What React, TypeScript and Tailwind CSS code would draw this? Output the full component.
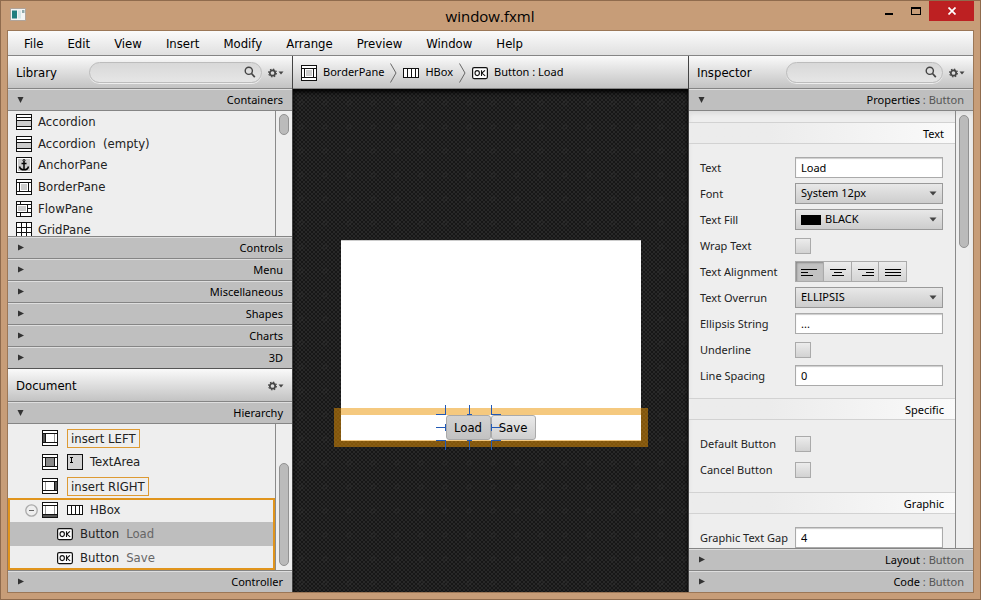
import type { ReactNode } from "react";

const INK = "#111";

function Icon({ children }: { children: ReactNode }) {
  return (
    <svg width="16" height="16" viewBox="0 0 16 16" fill="none" stroke={INK} className="shrink-0" aria-hidden="true" shapeRendering="crispEdges">
      {children}
    </svg>
  );
}

const Frame = ({ fill = "#fff" }: { fill?: string }) => <rect x="0.5" y="0.5" width="15" height="15" fill={fill} />;

const AccordionIcon = () => (
  <Icon>
    <Frame />
    <rect x="1" y="7" width="14" height="5" fill="#ccc" stroke="none" />
    <path d="M1 3.5h14M1 6.5h14M1 12.5h14" />
  </Icon>
);
const AnchorIcon = () => (
  <Icon>
    <Frame />
    <rect x="2" y="2" width="12" height="12" fill="#ccc" stroke="none" />
    <g shapeRendering="auto" stroke="#000">
      <circle cx="8" cy="3.5" r="1" />
      <path d="M8 4.5v8M5.5 6.5h5" strokeWidth="1.5" />
      <path d="M3.5 9.5c.5 2.2 2.2 3.3 4.5 3.3s4-1.1 4.5-3.3" strokeWidth="1.5" />
    </g>
  </Icon>
);
const BorderPaneIcon = () => (
  <Icon>
    <Frame />
    <rect x="5" y="5" width="6" height="6" fill="#ccc" stroke="none" />
    <path d="M1 3.5h14M1 12.5h14M3.5 3v10M12.5 3v10" />
  </Icon>
);
const FlowPaneIcon = () => (
  <Icon>
    <Frame />
    <rect x="2" y="5" width="8" height="5" fill="#ccc" stroke="none" />
    <path d="M1 3.5h14M1 11.5h14M4.5 1v3M11.5 4v7M12 7.5h4M4.5 12v3" />
  </Icon>
);
const GridPaneIcon = () => (
  <Icon>
    <Frame />
    <path d="M1 5.5h14M1 10.5h14M5.5 1v14M10.5 1v14" />
  </Icon>
);
function RegionIcon({ region }: { region: "left" | "center" | "right" | "bottom" }) {
  return (
    <Icon>
      <Frame />
      <path d="M1 3.5h14M1 12.5h14" />
      <path d="M3.5 4v8M12.5 4v8" stroke={region === "center" ? INK : "#999"} />
      {region === "left" && <rect x="0.5" y="3.5" width="3" height="9" fill="#555" />}
      {region === "center" && <rect x="3.5" y="3.5" width="9" height="9" fill="#888" />}
      {region === "right" && <rect x="12.5" y="3.5" width="3" height="9" fill="#555" />}
      {region === "bottom" && <rect x="0.5" y="12.5" width="15" height="3" fill="#555" />}
    </Icon>
  );
}
const TextAreaIcon = () => (
  <Icon>
    <Frame fill="#d4d4d4" />
    <path d="M3 3.5h3M4.5 3v5M3 8.5h3" stroke="#000" />
  </Icon>
);
const HBoxIcon = () => (
  <Icon>
    <rect x="0.5" y="3.5" width="15" height="9" fill="#fff" />
    <path d="M4.5 4v8M8.5 4v8M12.5 4v8" />
  </Icon>
);
const OkIcon = () => (
  <svg width="16" height="16" viewBox="0 0 16 16" className="shrink-0" aria-hidden="true">
    <rect x="0.6" y="2.6" width="14.8" height="11" rx="1.5" fill="#fff" stroke="#111" strokeWidth="1.2" />
    <g fill="none" stroke="#111" strokeWidth="1.1">
      <ellipse cx="5.2" cy="8.1" rx="2.2" ry="2.5" />
      <path d="M9.5 5.3v5.6M13 5.3 9.8 8.1 13.2 10.9" />
    </g>
  </svg>
);

const GearIcon = () => (
  <svg width="16" height="10" viewBox="0 0 16 10" aria-hidden="true">
    <circle cx="4.5" cy="5" r="2.7" fill="none" stroke="#444" strokeWidth="1.7" />
    <circle cx="4.5" cy="5" r="3.9" fill="none" stroke="#444" strokeWidth="1.1" strokeDasharray="1.53 1.53" />
    <path d="M10.5 3.5h5l-2.5 3z" fill="#444" />
  </svg>
);
const SearchIcon = () => (
  <svg width="12" height="12" viewBox="0 0 12 12" fill="none" stroke="#444" className="pointer-events-none absolute top-1 right-1.5" aria-hidden="true">
    <circle cx="4.8" cy="4.8" r="3.6" strokeWidth="1.4" />
    <path d="m7.5 7.5 3.3 3.6" strokeWidth="1.7" />
  </svg>
);

const PANEL_BAR = "flex h-[33px] shrink-0 items-center border-b border-[#858585] bg-linear-to-b from-[#fafafa] to-[#c3c3c3] pt-px";

function PanelHeader({ title, search }: { title: string; search?: boolean }) {
  return (
    <div className={`${PANEL_BAR} pr-2 pl-2`}>
      <h2 className="w-[73px] text-[13px]">{title}</h2>
      {search && (
        <div className={title === "Library" ? "relative flex-1" : "relative ml-4 flex-1"}>
          <input
            type="search"
            aria-label={`Search ${title}`}
            className="block h-[21px] w-full appearance-none rounded-full border border-[#bcbcbc] bg-linear-to-b from-[#d8d8d8] to-[#e6e6e6] pr-6 pl-3 text-[11px] shadow-[0_1px_0_#eee] outline-none"
          />
          <SearchIcon />
        </div>
      )}
      <button type="button" aria-label={`${title} options`} className={search ? "ml-1.5" : "ml-auto"}>
        <GearIcon />
      </button>
    </div>
  );
}

function SectionBar({ label, detail, open }: { label: string; detail?: string; open?: boolean }) {
  return (
    <button
      type="button"
      aria-expanded={!!open}
      className="flex h-[22px] w-full shrink-0 items-center justify-between border-t border-b border-t-[#dedede] border-b-[#858585] bg-[#bfbfbf] pr-[9px] pl-2 font-['Noto_Sans',sans-serif] text-[11px] last:h-[21px] last:border-b-0"
    >
      <svg width="10" height="10" viewBox="0 0 10 10" fill="#333" aria-hidden="true">
        {open ? <path d="M1.5 2h6l-3 6z" /> : <path d="M2 1.5 8 4.5 2 7.5z" />}
      </svg>
      <span>
        {label}
        {detail && <span className="text-[#555]"> : {detail}</span>}
      </span>
    </button>
  );
}

const LIBRARY = [
  { name: "Accordion", icon: <AccordionIcon /> },
  { name: "Accordion  (empty)", icon: <AccordionIcon /> },
  { name: "AnchorPane", icon: <AnchorIcon /> },
  { name: "BorderPane", icon: <BorderPaneIcon /> },
  { name: "FlowPane", icon: <FlowPaneIcon /> },
  { name: "GridPane", icon: <GridPaneIcon /> },
];

function TreeButtonRow({ value, selected }: { value: string; selected?: boolean }) {
  return (
    <li className={`flex h-6 items-center pl-[47px] ${selected ? "bg-[#bebebe]" : ""}`}>
      <OkIcon />
      <span className="ml-[7px]">Button</span>
      <span className="ml-[7px] text-[#666]">{value}</span>
    </li>
  );
}

function InsertRow({ region, label }: { region: "left" | "right"; label: string }) {
  return (
    <li className="flex h-6 items-center pl-[34px]">
      <RegionIcon region={region} />
      <span className="ml-[9px] border border-[#dd9a33] px-[3px] leading-[17px]">{label}</span>
    </li>
  );
}

function LeftColumn() {
  return (
    <aside className="flex w-[285px] shrink-0 flex-col border-r border-[#444]">
      <PanelHeader title="Library" search />
      <SectionBar label="Containers" open />
      <div className="flex min-h-0 flex-1 overflow-hidden bg-[#eee]">
        <ul className="flex h-[130px] flex-1 flex-col">
          {LIBRARY.map((it) => (
            <li key={it.name} className="flex min-h-0 flex-1 items-center gap-1.5 pl-2 text-[13px] whitespace-pre text-[#222]">
              {it.icon}
              {it.name}
            </li>
          ))}
        </ul>
        <div className="w-[17px] border-l border-[#8a8a8a] px-[3px] pt-[3px]">
          <div className="h-[21px] w-2.5 rounded-full border border-[#929292] bg-[#bbb]" />
        </div>
      </div>
      <div className="flex shrink-0 flex-col border-t border-b border-t-[#858585] border-b-[#555]">
        {["Controls", "Menu", "Miscellaneous", "Shapes", "Charts", "3D"].map((s) => (
          <SectionBar key={s} label={s} />
        ))}
      </div>
      <PanelHeader title="Document" />
      <SectionBar label="Hierarchy" open />
      <div className="flex h-[146px] shrink-0 bg-[#eee]">
        <ul className="flex flex-1 flex-col justify-end text-[13px] text-[#222]">
          <InsertRow region="left" label="insert LEFT" />
          <li className="flex h-6 items-center pl-[34px]">
            <RegionIcon region="center" />
            <span className="ml-[9px] flex items-center gap-[7px]">
              <TextAreaIcon />
              TextArea
            </span>
          </li>
          <InsertRow region="right" label="insert RIGHT" />
          <li className="outline-2 -outline-offset-2 outline-[#e0941c]">
            <div className="flex h-6 items-center pl-[17px]">
              <button type="button" aria-label="Collapse HBox">
                <svg width="13" height="13" viewBox="0 0 13 13" fill="none" aria-hidden="true">
                  <circle cx="6.5" cy="6.5" r="5.7" stroke="#aaa" strokeWidth="1.3" />
                  <path d="M4 6.5h5" stroke="#666" />
                </svg>
              </button>
              <span className="ml-1">
                <RegionIcon region="bottom" />
              </span>
              <span className="ml-[9px] flex items-center gap-[7px]">
                <HBoxIcon />
                HBox
              </span>
            </div>
            <ul className="px-0.5">
              <TreeButtonRow value="Load" selected />
              <TreeButtonRow value="Save" />
            </ul>
          </li>
        </ul>
        <div className="w-[17px] border-l border-[#8a8a8a] px-[3px] pt-[39px] pb-1">
          <div className="h-full w-2.5 rounded-full border border-[#929292] bg-[#bbb]" />
        </div>
      </div>
      <div className="shrink-0 border-t border-[#858585]">
        <SectionBar label="Controller" />
      </div>
    </aside>
  );
}

function Chevron() {
  return (
    <svg width="7" height="20" viewBox="0 0 7 20" fill="none" stroke="#666" aria-hidden="true">
      <path d="M.5.5 6 10 .5 19.5" />
    </svg>
  );
}

function Canvas() {
  return (
    <main className="flex min-w-0 flex-1 flex-col">
      <nav aria-label="Selection path" className={`${PANEL_BAR} gap-1.5 pl-2 font-['Noto_Sans',sans-serif] text-[11px]`}>
        <BorderPaneIcon />
        BorderPane
        <Chevron />
        <HBoxIcon />
        HBox
        <Chevron />
        <OkIcon />
        Button : Load
      </nav>
      <div className="flex flex-1 items-center justify-center bg-[#1e1e1e] bg-[radial-gradient(circle_at_8px_14px,transparent_1px,#3a3a3a55_2px,transparent_3px),repeating-conic-gradient(#282828_0_25%,#171717_0_50%)] bg-size-[24px_24px,4px_4px] shadow-[inset_0_3px_4px_#000]">
        <div className="flex h-[201px] w-[300px] flex-col border-t border-[#ccc] bg-white">
          <div className="flex-1" />
          <div className="relative flex h-[27px] justify-center">
            <div className="absolute -inset-x-[7px] -top-1.5 -bottom-1.5 border-[7px] border-[#eb9300]/50" />
            <div className="relative flex py-px">
              <button type="button" className="h-[25px] w-[45px] rounded-[3px] border border-[#aaa] bg-linear-to-b from-[#d2d2d2] to-[#c2c2c2] text-[13px]">
                Load
              </button>
              <button type="button" className="h-[25px] w-[45px] rounded-[3px] border border-[#aaa] bg-linear-to-b from-[#eaeaea] to-[#cfcfcf] text-[13px]">
                Save
              </button>
              <svg
                width="68"
                height="48"
                viewBox="0 0 68 48"
                fill="none"
                stroke="#2259b5"
                className="pointer-events-none absolute -top-2.5 -left-2.5"
                aria-hidden="true"
              >
                <path d="M9.5 1v9M0 10.5h10M33.5 1v9M31 10.5h5M55.5 1v9M55 10.5h10" />
                <path d="M0 23.5h9M9.5 20v7M55.5 20v7M56 23.5h9" />
                <path d="M9.5 37v9M0 36.5h10M33.5 37v9M31 36.5h5M55.5 37v9M55 36.5h10" />
              </svg>
            </div>
          </div>
        </div>
      </div>
    </main>
  );
}

function GroupTitle({ children }: { children: string }) {
  return (
    <h3 className="h-[22px] border-t border-b border-[#d2d2d2] bg-linear-to-r from-[#ececec] from-30% to-[#fafafa] pr-[11px] text-right leading-[22px]">
      {children}
    </h3>
  );
}

function Group({ children }: { children: ReactNode }) {
  return <div className="pt-[11px] pr-3 pb-[9px] pl-[11px]">{children}</div>;
}

function Row({ label, id, children }: { label: string; id: string; children: ReactNode }) {
  return (
    <div className="flex h-[26px] items-start pt-0.5">
      <label htmlFor={id} className="w-[95px] shrink-0 leading-[22px] whitespace-nowrap text-[#222]">
        {label}
      </label>
      {children}
    </div>
  );
}

function TextRow({ label, id, value }: { label: string; id: string; value: string }) {
  return (
    <Row label={label} id={id}>
      <input
        id={id}
        type="text"
        defaultValue={value}
        className="h-[21px] w-full min-w-0 border border-[#aaa] bg-white px-[5px] shadow-[inset_0_1px_1px_#ccc] outline-none"
      />
    </Row>
  );
}

function SelectRow({ label, id, value, swatch }: { label: string; id: string; value: string; swatch?: boolean }) {
  return (
    <Row label={label} id={id}>
      <div className="relative w-full">
        <select
          id={id}
          className={`block h-[21px] w-full appearance-none border border-[#999] bg-linear-to-b from-[#e8e8e8] to-[#cdcdcd] pr-5 outline-none ${swatch ? "pl-[29px]" : "pl-[5px]"}`}
        >
          <option>{value}</option>
        </select>
        {swatch && <span className="pointer-events-none absolute top-1.5 left-1.5 h-2.5 w-5 bg-black" />}
        <svg width="8" height="5" viewBox="0 0 8 5" className="pointer-events-none absolute top-2 right-1.5" aria-hidden="true">
          <path d="M.5.5h7L4 4.5z" fill="#444" />
        </svg>
      </div>
    </Row>
  );
}

function CheckRow({ label, id }: { label: string; id: string }) {
  return (
    <Row label={label} id={id}>
      <input id={id} type="checkbox" className="mt-[3px] size-4 appearance-none border border-[#aaa] bg-linear-to-b from-[#ececec] to-[#d2d2d2]" />
    </Row>
  );
}

const ALIGNMENTS = [
  { name: "Left", d: "M5 7.5h16M5 10.5h7M5 13.5h12" },
  { name: "Center", d: "M6 7.5h16M10 10.5h8M8 13.5h12" },
  { name: "Right", d: "M6 7.5h16M14 10.5h8M10 13.5h12" },
  { name: "Justify", d: "M6 7.5h16M6 10.5h16M6 13.5h16" },
];

function Inspector() {
  return (
    <aside className="flex w-[285px] shrink-0 flex-col border-l border-[#444]">
      <PanelHeader title="Inspector" search />
      <SectionBar label="Properties" detail="Button" open />
      <div className="flex min-h-0 flex-1 overflow-hidden bg-[#eee] shadow-[inset_0_3px_4px_#ddd]">
        <form className="min-w-0 flex-1 pt-[11px] font-['Noto_Sans',sans-serif] text-[11px]">
          <GroupTitle>Text</GroupTitle>
          <Group>
            <TextRow label="Text" id="text" value="Load" />
            <SelectRow label="Font" id="font" value="System 12px" />
            <SelectRow label="Text Fill" id="fill" value="BLACK" swatch />
            <CheckRow label="Wrap Text" id="wrap" />
            <Row label="Text Alignment" id="align-Left">
              <div className="flex w-28 border-l border-[#aaa]">
                {ALIGNMENTS.map((a, i) => (
                  <button
                    key={a.name}
                    id={`align-${a.name}`}
                    type="button"
                    aria-label={a.name}
                    aria-pressed={i === 0}
                    className={`flex h-[21px] w-7 items-center overflow-hidden border-y border-r border-[#aaa] ${i === 0 ? "bg-[#c2c2c2] shadow-[inset_1px_1px_2px_#888]" : "bg-linear-to-b from-[#ececec] to-[#d4d4d4]"}`}
                  >
                    <svg width="27" height="19" viewBox="0 0 27 19" stroke="#000" className="shrink-0" aria-hidden="true" shapeRendering="crispEdges">
                      <path d={a.d} />
                    </svg>
                  </button>
                ))}
              </div>
            </Row>
            <SelectRow label="Text Overrun" id="overrun" value="ELLIPSIS" />
            <TextRow label="Ellipsis String" id="ellipsis" value="..." />
            <CheckRow label="Underline" id="underline" />
            <TextRow label="Line Spacing" id="spacing" value="0" />
          </Group>
          <GroupTitle>Specific</GroupTitle>
          <Group>
            <CheckRow label="Default Button" id="default" />
            <CheckRow label="Cancel Button" id="cancel" />
          </Group>
          <GroupTitle>Graphic</GroupTitle>
          <Group>
            <TextRow label="Graphic Text Gap" id="gap" value="4" />
          </Group>
        </form>
        <div className="w-[18px] shrink-0 border-l border-[#8a8a8a] px-[3px] pt-1">
          <div className="h-[133px] w-2.5 rounded-full border border-[#929292] bg-[#bbb]" />
        </div>
      </div>
      <div className="flex shrink-0 flex-col border-t border-[#858585]">
        <SectionBar label="Layout" detail="Button" />
        <SectionBar label="Code" detail="Button" />
      </div>
    </aside>
  );
}

export default function App() {
  return (
    <div className="flex h-screen flex-col border border-[#8f6b4d] bg-[#c79d78] px-1.5 pb-1.5 font-['DejaVu_Sans_Condensed','DejaVu_Sans',sans-serif] text-black">
      <header className="flex h-[29px] shrink-0 items-start">
        <svg width="16" height="13" viewBox="0 0 16 13" className="mt-[7px] ml-[3px]" aria-hidden="true">
          <rect x="0.5" y="0.5" width="15" height="12" fill="#f3f5f5" stroke="#b0a49a" />
          <rect x="2" y="2.5" width="5" height="8" fill="#1f7f80" />
          <rect x="8" y="2.5" width="3" height="8" fill="#d5e6e8" />
          <rect x="12" y="2" width="2.5" height="3" fill="#8fa9ab" />
        </svg>
        <h1 className="flex-1 pt-1 pl-[79px] text-center font-['Open_Sans',sans-serif] text-[15px] leading-[22px]">window.fxml</h1>
        <button type="button" aria-label="Minimize" className="flex h-5 w-[27px] items-center justify-center">
          <svg width="8" height="8" viewBox="0 0 8 8" aria-hidden="true">
            <path d="M0 6h8v2H0z" />
          </svg>
        </button>
        <button type="button" aria-label="Maximize" className="flex h-5 w-[27px] items-center justify-center">
          <svg width="10" height="8" viewBox="0 0 10 8" aria-hidden="true">
            <path d="M0 0h10v8H0zM1 2v5h8V2z" fillRule="evenodd" />
          </svg>
        </button>
        <button type="button" aria-label="Close" className="flex h-5 w-[45px] items-center justify-center bg-[#bd2022]">
          <svg width="8" height="8" viewBox="0 0 8 8" stroke="#fff" strokeWidth="1.7" aria-hidden="true">
            <path d="m.5.5 7 7m0-7-7 7" />
          </svg>
        </button>
      </header>
      <div className="flex min-h-0 flex-1 flex-col border border-[#9b7757]">
        <nav aria-label="Main menu" className="flex h-[25px] shrink-0 items-center gap-6 border-b border-[#858585] bg-linear-to-b from-[#fbfbfb] to-[#e0e0e0] pt-px pl-4 text-[13px]">
          {["File", "Edit", "View", "Insert", "Modify", "Arrange", "Preview", "Window", "Help"].map((m) => (
            <button key={m} type="button">
              {m}
            </button>
          ))}
        </nav>
        <div className="flex min-h-0 flex-1">
          <LeftColumn />
          <Canvas />
          <Inspector />
        </div>
      </div>
    </div>
  );
}
